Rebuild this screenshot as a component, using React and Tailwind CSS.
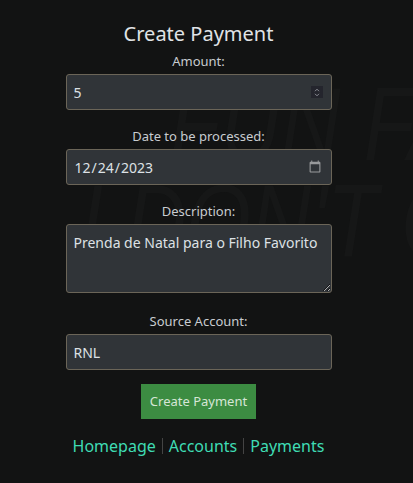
import { useState } from 'react';

const font = { fontFamily: '"Noto Sans", "Open Sans", sans-serif' };

function Field({ label, children }) {
  return (
    <div className="w-[266px] flex flex-col items-center">
      <label className="text-[13px] leading-5 text-[#c8ccd0] mb-[3px]">{label}</label>
      {children}
    </div>
  );
}

const inputCls =
  'w-full h-9 px-[7px] bg-[#303438] border border-[#6b6558] rounded-[3px] text-[14px] text-[#dde1e5] outline-none [color-scheme:dark]';

export default function App() {
  const [amount, setAmount] = useState('5');
  const [fecha, setFecha] = useState('2023-12-24');
  const [desc, setDesc] = useState('Prenda de Natal para o Filho Favorito');
  const [conta, setConta] = useState('RNL');

  return (
    <div className="relative min-h-[483px] bg-[#121313] overflow-hidden" style={font}>
      {/* marca de água */}
      <div
        aria-hidden="true"
        className="absolute left-0 top-[76px] pointer-events-none select-none italic text-[#161717] text-[104px] leading-[97px] whitespace-nowrap origin-left scale-x-[0.8]"
        style={{ fontFamily: '"Liberation Sans", sans-serif' }}>
        <div className="pl-[212px]">FUN FACT:</div>
        <div className="pl-[100px]">I DON'T CARE</div>
      </div>

      <div className="relative flex flex-col items-center pt-[20px] pr-4">
        <h1 className="text-[20px] leading-7 text-[#e0e3e6] mb-[3px]">Create Payment</h1>

        <form className="flex flex-col items-center" onSubmit={(e) => e.preventDefault()}>
          <Field label="Amount:">
            <div className="relative w-full">
              <input
                type="number"
                className={inputCls + ' [appearance:textfield] [&::-webkit-inner-spin-button]:appearance-none [&::-webkit-outer-spin-button]:appearance-none'}
                value={amount}
                onChange={(e) => setAmount(e.target.value)}
              />
              <span className="absolute right-[9px] top-[12px] w-3 h-3 bg-[#24252d] flex items-center justify-center">
                <svg width="6" height="9" viewBox="0 0 6 9" fill="none" stroke="#8a8c94" strokeWidth="1">
                  <path d="M1 3.2 L3 1.2 L5 3.2" />
                  <path d="M1 5.8 L3 7.8 L5 5.8" />
                </svg>
              </span>
            </div>
          </Field>

          <div className="h-4" />
          <Field label="Date to be processed:">
            <input
              type="date"
              className={inputCls + ' [&::-webkit-calendar-picker-indicator]:opacity-50'}
              value={fecha}
              onChange={(e) => setFecha(e.target.value)}
            />
          </Field>

          <div className="h-4" />
          <Field label="Description:">
            <textarea
              spellCheck="true"
              className={inputCls + ' h-[69px] py-[7px] text-[12.5px] resize-y'}
              value={desc}
              onChange={(e) => setDesc(e.target.value)}
            />
          </Field>

          <div className="h-[18px]" />
          <Field label="Source Account:">
            <input type="text" className={inputCls} value={conta} onChange={(e) => setConta(e.target.value)} />
          </Field>

          <button
            type="submit"
            className="mt-[14px] h-[35px] px-[9px] bg-[#3c8c42] text-[#d6e6d6] text-[13px]">
            Create Payment
          </button>
        </form>

        <nav className="mt-[15px] flex items-center text-[16px] text-[#3fdcb4]">
          <a href="#">Homepage</a>
          <span className="mx-[6px] h-4 w-px bg-[#444]" />
          <a href="#">Accounts</a>
          <span className="mx-[6px] h-4 w-px bg-[#444]" />
          <a href="#">Payments</a>
        </nav>
      </div>
    </div>
  );
}
